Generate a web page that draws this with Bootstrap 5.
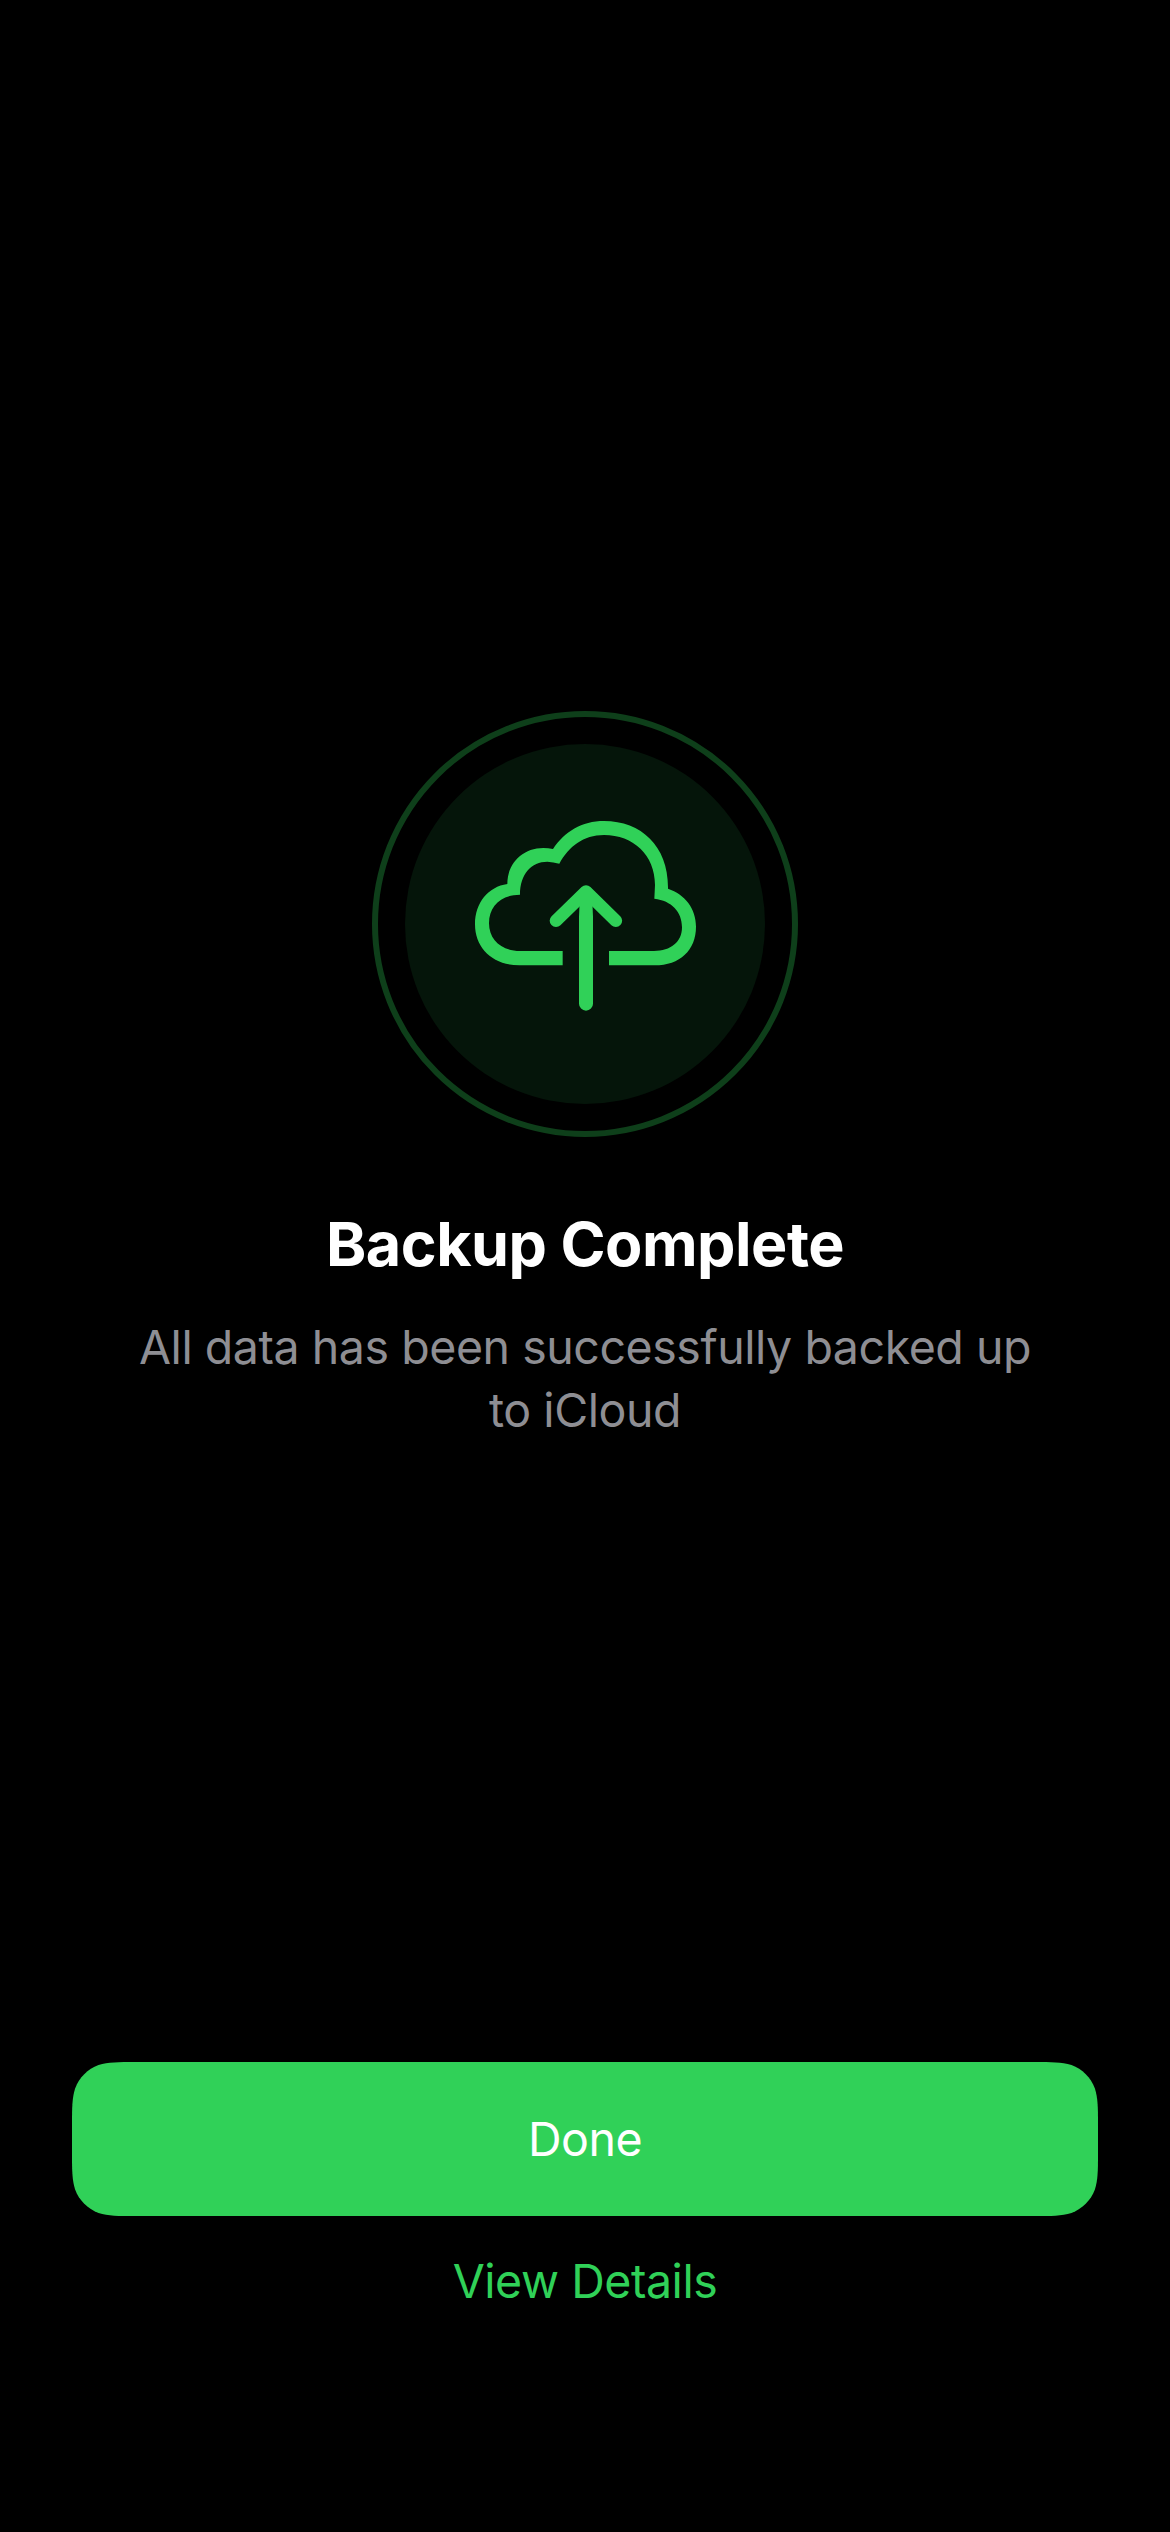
<!DOCTYPE html>
<html lang="en">
<head>
<meta charset="utf-8">
<meta name="viewport" content="width=device-width, initial-scale=1">
<title>Backup Complete</title>
<link href="https://cdn.jsdelivr.net/npm/bootstrap@5.3.0/dist/css/bootstrap.min.css" rel="stylesheet">
<style>
  body { background: #000; font-family: Inter, "Liberation Sans", sans-serif; font-size: 46.5px; line-height: 63px; letter-spacing: -.45px; }
  .screen { height: 2532px; padding: 711px 72px 0; }
  .ring { width: 426px; height: 426px; border: 6px solid #0e3f1a; }
  .disc { width: 360px; height: 360px; background: #05150a; }
  .disc svg { width: 250px; height: 230px; margin-top: -18px; }
  .headline { font-size: 61px; line-height: 76px; letter-spacing: -.5px; margin: 69px 0 0; }
  .message { color: #8e8e93; margin-top: 34px; width: 920px; }
  .actions { margin-bottom: 195px; }
  .btn-done, .btn-details { border: 0; border-radius: 0; font-size: inherit; line-height: inherit; letter-spacing: inherit; }
  .btn-done, .btn-done:hover {
    height: 154px; background: #30d158; color: #fff;
    clip-path: path("M64 0H962C980 0 989 0 999.5 3.1C1010.3 7.1 1018.9 15.7 1022.9 26.5C1026 36.5 1026 45.7 1026 64V90C1026 108.3 1026 117.5 1022.9 127.5C1018.9 138.3 1010.3 146.9 999.5 150.9C989 154 980 154 962 154H64C45.7 154 36.5 154 26.5 150.9C15.7 146.9 7.1 138.3 3.1 127.5C0 117.5 0 108.3 0 90V64C0 45.7 0 36.5 3.1 26.5C7.1 15.7 15.7 7.1 26.5 3.1C36.5 0 45.7 0 64 0Z");
  }
  .btn-details, .btn-details:hover { color: #30d158; height: 112px; margin-top: 9px; }
</style>
</head>
<body>
<main class="screen d-flex flex-column align-items-center text-center">
  <div class="ring rounded-circle d-flex align-items-center justify-content-center flex-shrink-0">
    <div class="disc rounded-circle d-flex align-items-center justify-content-center">
      <svg viewBox="0 0 750 690" aria-hidden="true">
        <path fill="#30d158" d="M308 453H180C125 453 87 420 87 370C87 318 122 285 180 284C180 222 214 185 262 185Q280 186 298 191C326 140 370 105 432 105C520 105 585 165 585 255L583 296C635 302 666 335 666 382C666 426 632 453 582 453H447V496H584C660 496 708 450 708 380C708 325 675 283 624 266C626 140 545 63 432 63C365 63 314 95 279 147Q265 144 250 144C188 144 142 190 142 252C85 260 45 308 45 373C45 445 98 496 178 496H308Z"/>
        <path fill="#30d158" d="M358.5 290V316L357 350V611A21 21 0 0 0 399 611V350L397.5 316V290Z"/>
        <path fill="none" stroke="#30d158" stroke-width="38" stroke-linecap="round" stroke-linejoin="round" d="M288 362L378 274.5L467.5 362"/>
      </svg>
    </div>
  </div>
  <h1 class="headline fw-bold text-white">Backup Complete</h1>
  <p class="message mb-0">All data has been successfully backed up to iCloud</p>
  <div class="actions d-grid w-100 mt-auto">
    <button type="button" class="btn btn-done">Done</button>
    <button type="button" class="btn btn-details">View Details</button>
  </div>
</main>
<script src="https://cdn.jsdelivr.net/npm/bootstrap@5.3.0/dist/js/bootstrap.bundle.min.js"></script>
</body>
</html>
